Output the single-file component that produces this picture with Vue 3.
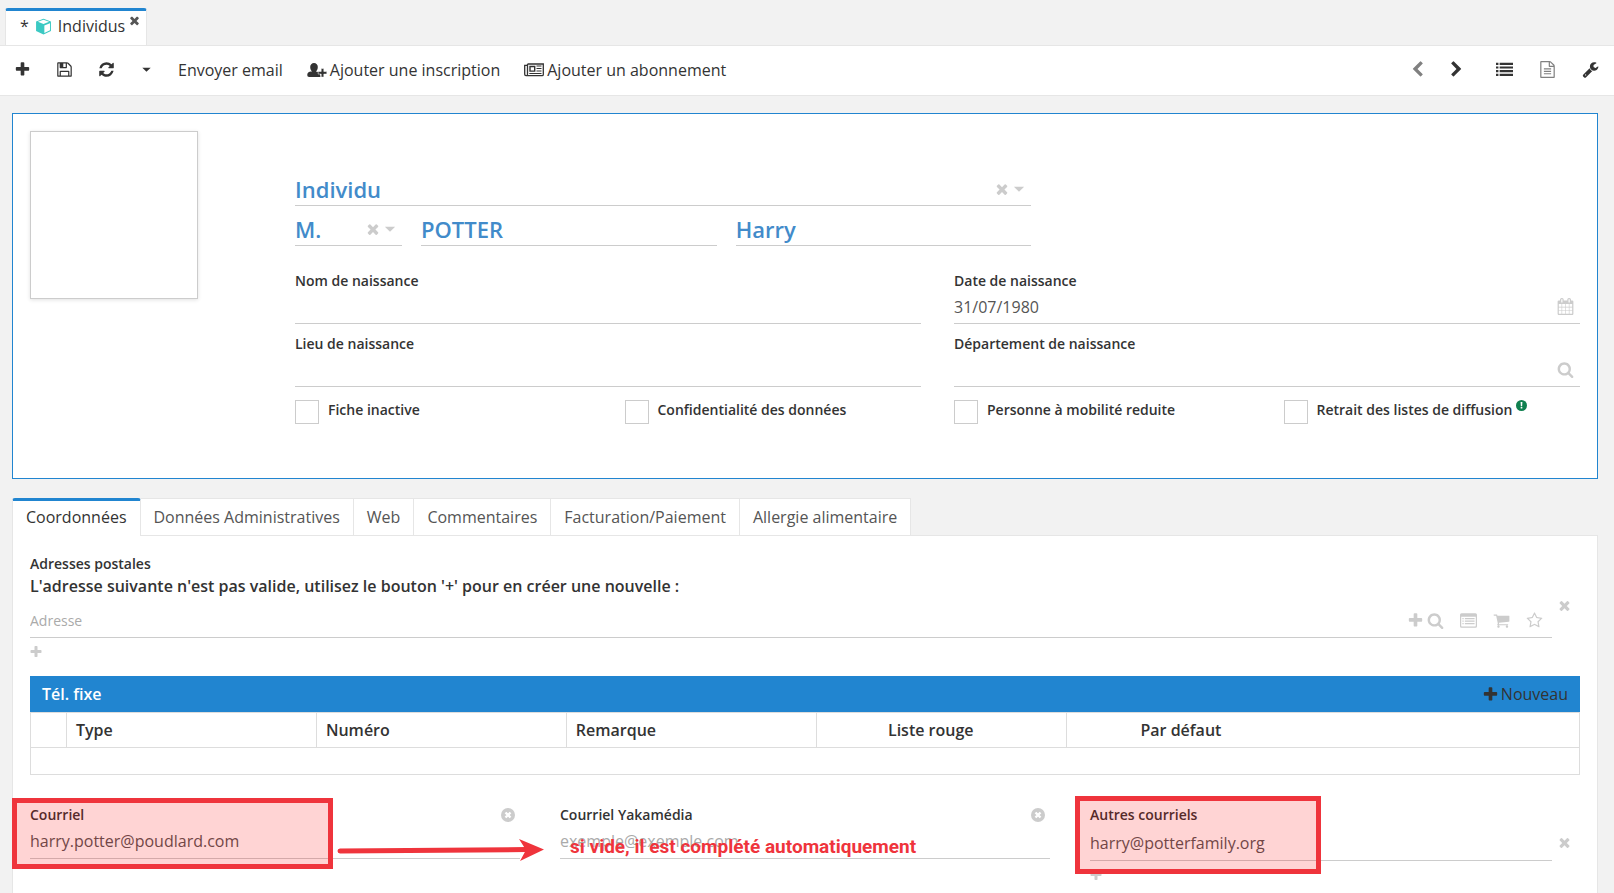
<script setup>
import { ref, h } from 'vue'

const paths = {
  plus: 'M1600 736v192q0 40-28 68t-68 28h-416v416q0 40-28 68t-68 28h-192q-40 0-68-28t-28-68v-416h-416q-40 0-68-28t-28-68v-192q0-40 28-68t68-28h416v-416q0-40 28-68t68-28h192q40 0 68 28t28 68v416h416q40 0 68 28t28 68z',
  close: 'M1490 1322q0 40-28 68l-136 136q-28 28-68 28t-68-28l-294-294-294 294q-28 28-68 28t-68-28l-136-136q-28-28-28-68t28-68l294-294-294-294q-28-28-28-68t28-68l136-136q28-28 68-28t68 28l294 294 294-294q28-28 68-28t68 28l136 136q28 28 28 68t-28 68l-294 294 294 294q28 28 28 68z',
  search: 'M1216 832q0-185-131.5-316.5t-316.5-131.5-316.5 131.5-131.5 316.5 131.5 316.5 316.5 131.5 316.5-131.5 131.5-316.5zm512 832q0 52-38 90t-90 38q-54 0-90-38l-343-342q-179 124-399 124-143 0-273.5-55.5t-225-150-150-225-55.5-273.5 55.5-273.5 150-225 225-150 273.5-55.5 273.5 55.5 225 150 150 225 55.5 273.5q0 220-124 399l343 343q37 37 37 90z',
  save: 'M512 1536h768v-384h-768v384zm896 0h128v-896q0-14-10-38.5t-20-34.5l-281-281q-10-10-34-20t-39-10v416q0 40-28 68t-68 28h-576q-40 0-68-28t-28-68v-416h-128v1280h128v-416q0-40 28-68t68-28h832q40 0 68 28t28 68v416zm-384-928v-320q0-13-9.5-22.5t-22.5-9.5h-192q-13 0-22.5 9.5t-9.5 22.5v320q0 13 9.5 22.5t22.5 9.5h192q13 0 22.5-9.5t9.5-22.5zm640 32v928q0 40-28 68t-68 28h-1344q-40 0-68-28t-28-68v-1344q0-40 28-68t68-28h928q40 0 88 20t76 48l280 280q28 28 48 76t20 88z',
  refresh: 'M1639 1056q0 5-1 7-64 268-268 434.5t-478 166.5q-146 0-282.5-55t-243.5-157l-129 129q-19 19-45 19t-45-19-19-45v-448q0-26 19-45t45-19h448q26 0 45 19t19 45-19 45l-137 137q71 66 161 102t187 36q134 0 250-65t186-179q11-17 53-117 8-23 30-23h192q13 0 22.5 9.5t9.5 22.5zm25-800v448q0 26-19 45t-45 19h-448q-26 0-45-19t-19-45 19-45l138-138q-148-137-349-137-134 0-250 65t-186 179q-11 17-53 117-8 23-30 23h-199q-13 0-22.5-9.5t-9.5-22.5v-7q65-268 270-434.5t480-166.5q146 0 284 55.5t245 156.5l130-129q19-19 45-19t45 19 19 45z',
  left: 'M1427 301l-531 531 531 531q19 19 19 45t-19 45l-166 166q-19 19-45 19t-45-19l-742-742q-19-19-19-45t19-45l742-742q19-19 45-19t45 19l166 166q19 19 19 45t-19 45z',
  right: 'M1363 877l-742 742q-19 19-45 19t-45-19l-166-166q-19-19-19-45t19-45l531-531-531-531q-19-19-19-45t19-45l166-166q19-19 45-19t45 19l742 742q19 19 19 45t-19 45z',
  list: 'M0 192h256v224h-256zM384 192h1408v224h-1408zM0 576h256v224h-256zM384 576h1408v224h-1408zM0 960h256v224h-256zM384 960h1408v224h-1408zM0 1344h256v224h-256zM384 1344h1408v224h-1408z',
  file: 'M1596 380q28 28 48 76t20 88v1152q0 40-28 68t-68 28h-1344q-40 0-68-28t-28-68v-1600q0-40 28-68t68-28h896q40 0 88 20t76 48zm-444-244v376h376q-10-29-22-41l-313-313q-12-12-41-22zm384 1528v-1024h-416q-40 0-68-28t-28-68v-416h-768v1536h1280zm-1024-864q0-14 9-23t23-9h704q14 0 23 9t9 23v64q0 14-9 23t-23 9h-704q-14 0-23-9t-9-23v-64zm736 224q14 0 23 9t9 23v64q0 14-9 23t-23 9h-704q-14 0-23-9t-9-23v-64q0-14 9-23t23-9h704zm0 256q14 0 23 9t9 23v64q0 14-9 23t-23 9h-704q-14 0-23-9t-9-23v-64q0-14 9-23t23-9h704z',
  wrench: 'M448 1472q0-26-19-45t-45-19-45 19-19 45 19 45 45 19 45-19 19-45zm644-420l-682 682q-37 37-90 37-52 0-91-37l-106-108q-38-36-38-90 0-53 38-91l681-681q39 98 114.5 173.5t173.5 114.5zm634-435q0 39-23 106-47 134-164.5 217.5t-258.5 83.5q-185 0-316.5-131.5t-131.5-316.5 131.5-316.5 316.5-131.5q58 0 121.5 16.5t107.5 46.5q16 11 16 28t-16 28l-293 169v224l193 107q5-3 79-48.5t135.5-81 70.5-35.5q15 0 23.5 10t8.500 25z',
  calendar: 'M192 1664h288v-288h-288v288zm352 0h320v-288h-320v288zm-352-352h288v-320h-288v320zm352 0h320v-320h-320v320zm-352-384h288v-288h-288v288zm736 736h320v-288h-320v288zm-384-736h320v-288h-320v288zm768 736h288v-288h-288v288zm-384-352h320v-320h-320v320zm-352-864v-288q0-13-9.5-22.5t-22.5-9.5h-64q-13 0-22.5 9.5t-9.5 22.5v288q0 13 9.5 22.5t22.5 9.5h64q13 0 22.5-9.5t9.5-22.5zm736 864h288v-320h-288v320zm-384-384h320v-288h-320v288zm384 0h288v-288h-288v288zm32-480v-288q0-13-9.5-22.5t-22.5-9.5h-64q-13 0-22.5 9.5t-9.5 22.5v288q0 13 9.5 22.5t22.5 9.5h64q13 0 22.5-9.5t9.5-22.5zm384-64v1280q0 52-38 90t-90 38h-1408q-52 0-90-38t-38-90v-1280q0-52 38-90t90-38h128v-96q0-66 47-113t113-47h64q66 0 113 47t47 113v96h384v-96q0-66 47-113t113-47h64q66 0 113 47t47 113v96h128q52 0 90 38t38 90z',
  cart: 'M704 1536q0 52-38 90t-90 38-90-38-38-90 38-90 90-38 90 38 38 90zm896 0q0 52-38 90t-90 38-90-38-38-90 38-90 90-38 90 38 38 90zm128-1088v512q0 24-16.5 42.5t-40.5 21.5l-1044 122q13 60 13 70 0 16-24 64h920q26 0 45 19t19 45-19 45-45 19h-1024q-26 0-45-19t-19-45q0-11 8-31.5t16-36 21.5-40 15.5-29.5l-177-823h-204q-26 0-45-19t-19-45 19-45 45-19h256q16 0 28.5 6.500t19.5 15.5 13 24.5 8 26 5.5 29.5 4.5 26h1201q26 0 45 19t19 45z',
  star: 'M1201 1004l306-297-422-62-189-382-189 382-422 62 306 297-73 421 378-199 377 199zm527-357q0 22-26 48l-363 354 86 500q1 7 1 20 0 50-41 50-19 0-40-12l-449-236-449 236q-22 12-40 12-21 0-31.5-14.5t-10.5-35.5q0-6 2-20l86-500-364-354q-25-27-25-48 0-37 56-46l502-73 225-455q19-41 49-41t49 41l225 455 502 73q56 9 56 46z',
  listAlt: 'M160 128h1472q160 0 160 160v1216q0 160-160 160h-1472q-160 0-160-160v-1216q0-160 160-160zm-32 384v976q0 48 48 48h1440q48 0 48-48v-976zM256 640h128v128h-128zM512 640h1024v128h-1024zM256 896h128v128h-128zM512 896h1024v128h-1024zM256 1152h128v128h-128zM512 1152h1024v128h-1024z',
  caret: 'M320 640h1152l-576 576z'
}

const Icon = (p) =>
  h('svg', { class: 'icon', viewBox: '0 0 1792 1792', 'aria-hidden': 'true' }, [
    h('path', { d: paths[p.name], 'fill-rule': p.name === 'listAlt' ? 'evenodd' : 'nonzero' })
  ])
Icon.props = ['name']

const tabs = ['Coordonnées', 'Données Administratives', 'Web', 'Commentaires', 'Facturation/Paiement', 'Allergie alimentaire']
const active = ref(0)
const kind = ref('Individu')
const title = ref('M.')
const lastName = ref('POTTER')
const firstName = ref('Harry')
const birthName = ref('')
const birthDate = ref('31/07/1980')
const birthPlace = ref('')
const department = ref('')
const address = ref('')
const email = ref('harry.potter@poudlard.com')
const secondEmail = ref('')
const otherEmail = ref('harry@potterfamily.org')
const flags = ref([
  { id: 'inactive', label: 'Fiche inactive', on: false },
  { id: 'private', label: 'Confidentialité des données', on: false },
  { id: 'mobility', label: 'Personne à mobilité reduite', on: false },
  { id: 'mailing', label: 'Retrait des listes de diffusion', on: false, info: true }
])
</script>

<template>
  <div class="page">
    <nav class="windows" aria-label="Onglets ouverts">
      <div class="window">
        <span>*</span>
        <svg class="cube" viewBox="0 0 16 16" aria-hidden="true">
          <path d="M8 .7 15 3.200v9L8 15.500 1 12.200V3.200z" fill="#3bc9c3" />
          <path d="M8 1.700 13.300 3.600 8 5.600 2.700 3.600zM8.800 7.100 14.100 5v6.600l-5.300 2.500z" fill="#fff" />
        </svg>
        <span>Individus</span>
        <button class="shut" aria-label="Fermer l'onglet"><Icon name="close" /></button>
      </div>
    </nav>

    <header class="toolbar">
      <div class="tools">
        <button aria-label="Nouveau"><Icon name="plus" /></button>
        <button aria-label="Enregistrer"><Icon name="save" /></button>
        <button aria-label="Recharger"><Icon name="refresh" /></button>
        <button class="more" aria-label="Plus d'actions"><Icon name="caret" /></button>
      </div>
      <div class="actions">
        <button>Envoyer email</button>
        <button>
          <svg class="wide" viewBox="0 0 20 16" aria-hidden="true">
            <path d="M7 1a3.800 3.800 0 0 1 3.800 4c0 2-.9 3.600-1.900 4.400C12.300 9.600 13.300 11 13.500 15H2.200C.8 15 .3 14.300.3 13c.1-2.300 1-3.600 4.800-3.600C4 8.600 3.200 7 3.200 5A3.800 3.800 0 0 1 7 1z" />
            <path d="M14.200 6.500h2.600v3h3v2.600h-3v3h-2.600v-3h-3V9.500h3z" stroke="#fff" stroke-width=".5" />
          </svg>
          Ajouter une inscription
        </button>
        <button>
          <svg class="wide" viewBox="0 0 20 16" aria-hidden="true">
            <path d="M3.500 2h15.800v10.500a1.200 1.200 0 0 1-1.200 1.200H2a1.400 1.400 0 0 1-1.300-1.400V3.300h2.500M3.500 2v10.200c0 .9-.6 1.500-1.400 1.500" fill="none" stroke="currentColor" stroke-width="1.300" />
            <path d="M6 4.500h4.700v4.600H6z" fill="none" stroke="currentColor" stroke-width="1.400" />
            <path d="M12.500 4h5M12.500 6.500h5M12.500 9h5M5.300 11.500h12.200" stroke="currentColor" stroke-width="1" />
          </svg>
          Ajouter un abonnement
        </button>
      </div>
      <div class="views">
        <button class="dim" aria-label="Précédent"><Icon name="left" /></button>
        <button class="next" aria-label="Suivant"><Icon name="right" /></button>
        <button class="rows" aria-label="Vue liste"><Icon name="list" /></button>
        <button class="dim" aria-label="Vue formulaire"><Icon name="file" /></button>
        <button aria-label="Outils"><Icon name="wrench" /></button>
      </div>
    </header>

    <main>
      <section class="card">
        <div class="photo"></div>
        <div class="identity">
          <div class="names">
            <div class="big whole">
              <select v-model="kind" aria-label="Type de fiche"><option>Individu</option></select>
              <button aria-label="Effacer le type"><Icon name="close" /></button>
              <Icon name="caret" />
            </div>
            <div class="big">
              <select v-model="title" aria-label="Civilité"><option>M.</option></select>
              <button aria-label="Effacer la civilité"><Icon name="close" /></button>
              <Icon name="caret" />
            </div>
            <div class="big"><input v-model="lastName" aria-label="Nom" /></div>
            <div class="big"><input v-model="firstName" aria-label="Prénom" /></div>
          </div>

          <div class="birth">
            <div>
              <label for="bname">Nom de naissance</label>
              <div class="line"><input id="bname" v-model="birthName" /></div>
            </div>
            <div>
              <label for="bdate">Date de naissance</label>
              <div class="line inset">
                <input id="bdate" v-model="birthDate" />
                <button aria-label="Calendrier"><Icon name="calendar" /></button>
              </div>
            </div>
            <div>
              <label for="bplace">Lieu de naissance</label>
              <div class="line"><input id="bplace" v-model="birthPlace" /></div>
            </div>
            <div>
              <label for="bdep">Département de naissance</label>
              <div class="line inset">
                <input id="bdep" v-model="department" />
                <button aria-label="Rechercher un département"><Icon name="search" /></button>
              </div>
            </div>
          </div>

          <div class="flags">
            <div v-for="f in flags" :key="f.id" class="flag">
              <input :id="f.id" v-model="f.on" type="checkbox" />
              <label :for="f.id">{{ f.label }}</label>
              <svg v-if="f.info" class="info" viewBox="0 0 12 12" aria-hidden="true">
                <circle cx="6" cy="6" r="6" />
                <path d="M5 2.200h2l-.3 4.600H5.300zM5.100 7.700h1.800v1.700H5.100z" fill="#fff" />
              </svg>
            </div>
          </div>
        </div>
      </section>

      <div class="tabs" role="tablist">
        <button
          v-for="(t, i) in tabs"
          :key="t"
          role="tab"
          :aria-selected="i === active"
          :class="{ on: i === active }"
          @click="active = i"
        >{{ t }}</button>
      </div>

      <section class="panel" role="tabpanel">
        <label for="address">Adresses postales</label>
        <p class="warning">L'adresse suivante n'est pas valide, utilisez le bouton '+' pour en créer une nouvelle :</p>
        <div class="entry">
          <div class="line address">
            <input id="address" v-model="address" placeholder="Adresse" />
            <button aria-label="Créer une adresse"><Icon name="plus" /></button>
            <button class="find" aria-label="Rechercher une adresse"><Icon name="search" /></button>
            <button aria-label="Liste"><Icon name="listAlt" /></button>
            <button aria-label="Panier"><Icon name="cart" /></button>
            <button aria-label="Favori"><Icon name="star" /></button>
          </div>
          <button class="remove top" aria-label="Retirer l'adresse"><Icon name="close" /></button>
        </div>
        <button class="add" aria-label="Ajouter une adresse"><Icon name="plus" /></button>

        <div class="grid-head">
          <h2>Tél. fixe</h2>
          <button><Icon name="plus" />Nouveau</button>
        </div>
        <table>
          <thead>
            <tr>
              <th class="pick"></th>
              <th>Type</th>
              <th>Numéro</th>
              <th>Remarque</th>
              <th class="mid">Liste rouge</th>
              <th class="mid open">Par défaut</th>
              <th class="rest"></th>
            </tr>
          </thead>
          <tbody>
            <tr><td colspan="7"></td></tr>
          </tbody>
        </table>

        <div class="emails">
          <div class="email">
            <div class="caption">
              <label for="mail">Courriel</label>
              <button aria-label="Effacer le courriel">
                <svg class="disc" viewBox="0 0 14 14" aria-hidden="true">
                  <circle cx="7" cy="7" r="7" />
                  <path d="M4.500 4.500l5 5M9.500 4.500l-5 5" stroke="#fff" stroke-width="2.400" />
                </svg>
              </button>
            </div>
            <div class="line"><input id="mail" v-model="email" /></div>
            <div class="mark first"></div>
            <svg class="arrow" viewBox="0 0 208 22" aria-hidden="true">
              <path d="M3 12 190 10.500" stroke="#ef343c" stroke-width="5" stroke-linecap="round" />
              <path d="M182 0 207 10.500 183 22 189 11z" fill="#ef343c" />
            </svg>
          </div>
          <div class="email">
            <div class="caption">
              <label for="mail2">Courriel Yakamédia</label>
              <button aria-label="Effacer le courriel Yakamédia">
                <svg class="disc" viewBox="0 0 14 14" aria-hidden="true">
                  <circle cx="7" cy="7" r="7" />
                  <path d="M4.500 4.500l5 5M9.500 4.500l-5 5" stroke="#fff" stroke-width="2.400" />
                </svg>
              </button>
            </div>
            <div class="line"><input id="mail2" v-model="secondEmail" placeholder="exemple@exemple.com" /></div>
            <div class="note">si vide, il est complété automatiquement</div>
          </div>
          <div class="email">
            <div class="caption"><label for="mail3">Autres courriels</label></div>
            <div class="entry">
              <div class="line tall"><input id="mail3" v-model="otherEmail" /></div>
              <button class="remove" aria-label="Retirer le courriel"><Icon name="close" /></button>
            </div>
            <button class="add" aria-label="Ajouter un courriel"><Icon name="plus" /></button>
            <div class="mark last"></div>
          </div>
        </div>
      </section>
    </main>
  </div>
</template>

<style>
body {
  background: #f2f2f2;
}
</style>

<style scoped>
* {
  box-sizing: border-box;
}
.page {
  height: 100vh;
  overflow: hidden;
  display: flex;
  flex-direction: column;
  background: #f2f2f2;
  color: #333;
  font: 16px/24px "Open Sans", "Noto Sans", sans-serif;
}
button,
input,
select {
  font: inherit;
  color: inherit;
  background: none;
  border: 0;
  padding: 0;
  margin: 0;
  border-radius: 0;
  outline: 0;
}
button {
  display: flex;
  align-items: center;
  white-space: nowrap;
  flex: none;
}
svg {
  display: block;
  flex: none;
  fill: currentColor;
}
.icon {
  width: 17px;
  height: 17px;
}
label {
  display: block;
  font-size: 14px;
  line-height: 19px;
  font-weight: 600;
}

.windows {
  flex: none;
  display: flex;
  padding: 8px 5px 0;
  border-bottom: 1px solid #e6e6e6;
}
.window {
  display: flex;
  align-items: center;
  height: 37px;
  padding: 0 5px 4px 14px;
  background: #fff;
  border: 1px solid #e6e6e6;
  border-width: 3px 1px 0;
  border-top-color: #2185d0;
  border-radius: 3px 3px 0 0;
}
.cube {
  width: 17px;
  height: 17px;
  margin: 0 6px;
}
.shut {
  align-self: flex-start;
  margin: 3px 0 0 3px;
  color: #555;
}
.shut .icon {
  width: 13px;
  height: 13px;
}

.toolbar {
  flex: none;
  display: flex;
  align-items: center;
  height: 50px;
  padding: 0 15px 2px 14px;
  background: #fff;
  border-bottom: 1px solid #e6e6e6;
}
.tools {
  display: flex;
  gap: 25px;
}
.more .icon {
  width: 13px;
  height: 13px;
}
.actions {
  display: flex;
  gap: 24px;
  margin-left: 25px;
}
.wide {
  width: 20px;
  height: 16px;
  margin-right: 3px;
}
.views {
  display: flex;
  gap: 26px;
  margin-left: auto;
}
.dim {
  color: #808080;
}
.next {
  margin-left: -4px;
}
.rows {
  margin-left: 5px;
}

main {
  flex: 1;
  display: flex;
  flex-direction: column;
  padding: 17px 16px 0 12px;
}
.card {
  display: flex;
  gap: 97px;
  padding: 17px 17px 54px;
  background: #fff;
  border: 1px solid #2185d0;
}
.photo {
  flex: none;
  width: 168px;
  height: 168px;
  border: 1px solid #ccc;
  box-shadow: 0 1px 4px rgba(0, 0, 0, 0.12);
}
.identity {
  flex: 1;
  padding-top: 35px;
}
.names {
  display: grid;
  grid-template-columns: 107px 1fr 1fr;
  column-gap: 19px;
  width: 57.3%;
  color: #428bca;
  font-size: 22px;
  line-height: 32px;
  font-weight: 600;
}
.big {
  display: flex;
  align-items: center;
  gap: 1px;
  height: 40px;
  padding: 6px 4px 0 0;
  border-bottom: 1px solid #ccc;
}
.big .icon {
  width: 16px;
  height: 16px;
  color: #ccc;
}
.whole {
  grid-column: 1 / -1;
}
.big input,
.big select,
.line input {
  flex: 1;
  min-width: 0;
  width: 100%;
  appearance: none;
}
.birth {
  display: grid;
  grid-template-columns: 1fr 1fr;
  gap: 10px 33px;
  margin-top: 25px;
}
.line {
  flex: 1;
  display: flex;
  align-items: center;
  height: 34px;
  border-bottom: 1px solid #ccc;
  color: #555;
}
.line button,
.add,
.remove {
  color: #ccc;
}
.line input::placeholder {
  color: #aaa;
  opacity: 1;
}
.inset {
  padding-right: 6px;
}
.flags {
  display: grid;
  grid-template-columns: repeat(4, 1fr);
  column-gap: 33px;
  margin-top: 13px;
}
.flag {
  display: flex;
  height: 24px;
}
.flag input {
  appearance: none;
  width: 24px;
  height: 24px;
  margin-right: 9px;
  border: 1px solid #ccc;
}
.info {
  width: 11px;
  height: 11px;
  margin-left: 4px;
  color: #108050;
}

.tabs {
  display: flex;
  margin-top: 19px;
  color: #555;
}
.tabs button {
  height: 37px;
  padding: 0 13px;
  background: #fff;
  border: 1px solid #e6e6e6;
  border-width: 1px 1px 0 0;
}
.tabs .on {
  z-index: 1;
  height: 38px;
  margin-bottom: -1px;
  padding-bottom: 3px;
  color: #333;
  border-top: 3px solid #2185d0;
  border-left-width: 1px;
  border-radius: 3px 3px 0 0;
}
.panel {
  flex: 1;
  padding: 18px 17px;
  background: #fff;
  border: 1px solid #e6e6e6;
  border-bottom: 0;
}
.warning {
  margin: 0;
  padding-top: 1px;
  font-weight: 600;
}
.entry {
  display: flex;
}
.address {
  height: 40px;
  gap: 16px;
  padding: 6px 9px 0 0;
}
.address input {
  font-size: 14px;
}
.address .find {
  margin-left: -13px;
}
.remove {
  width: 24px;
  justify-content: center;
}
.remove .icon {
  width: 15px;
  height: 15px;
}
.top {
  align-self: flex-start;
}
.email .entry,
.panel > .entry {
  padding-right: 4px;
}
.add {
  margin: 7px 0 0 -1px;
}
.add .icon {
  width: 14px;
  height: 14px;
}

.grid-head {
  display: flex;
  align-items: center;
  justify-content: space-between;
  height: 36px;
  margin-top: 17px;
  padding: 0 12px;
  background: #2185d0;
}
.grid-head h2 {
  margin: 0;
  color: #fff;
  font-size: 16px;
  line-height: 24px;
  font-weight: 600;
}
.grid-head .icon {
  margin-right: 2px;
}
table {
  width: 100%;
  table-layout: fixed;
  border-collapse: collapse;
}
th,
td {
  height: 35px;
  padding: 0 9px;
  border: 1px solid #ddd;
  text-align: left;
  font-weight: 600;
}
td {
  height: 27px;
}
.pick {
  width: 36px;
}
.rest {
  width: 17%;
  border-left: 0;
}
.mid {
  padding: 0 21px 0 0;
  text-align: center;
}
.open {
  border-right: 0;
}

.emails {
  display: grid;
  grid-template-columns: repeat(3, 1fr);
  gap: 40px;
  margin-top: 30px;
}
.email {
  position: relative;
}
.caption {
  display: flex;
  justify-content: space-between;
  padding-right: 5px;
}
.caption button {
  color: #ccc;
}
.disc {
  width: 14px;
  height: 14px;
}
.email .line {
  height: 35px;
}
.email .tall {
  height: 37px;
  padding-top: 2px;
}
.mark {
  position: absolute;
  border: 5px solid #ef343c;
  background: rgba(255, 0, 0, 0.17);
  pointer-events: none;
}
.first {
  top: -7px;
  left: -18px;
  width: 321px;
  height: 71px;
}
.last {
  top: -9px;
  left: -15px;
  width: 246px;
  height: 78px;
}
.arrow {
  position: absolute;
  top: 34px;
  left: 307px;
  width: 208px;
  height: 22px;
}
.note {
  position: absolute;
  top: 30px;
  left: 10px;
  color: #ef343c;
  font: 700 19px/24px Roboto, sans-serif;
  white-space: nowrap;
  pointer-events: none;
}
</style>
